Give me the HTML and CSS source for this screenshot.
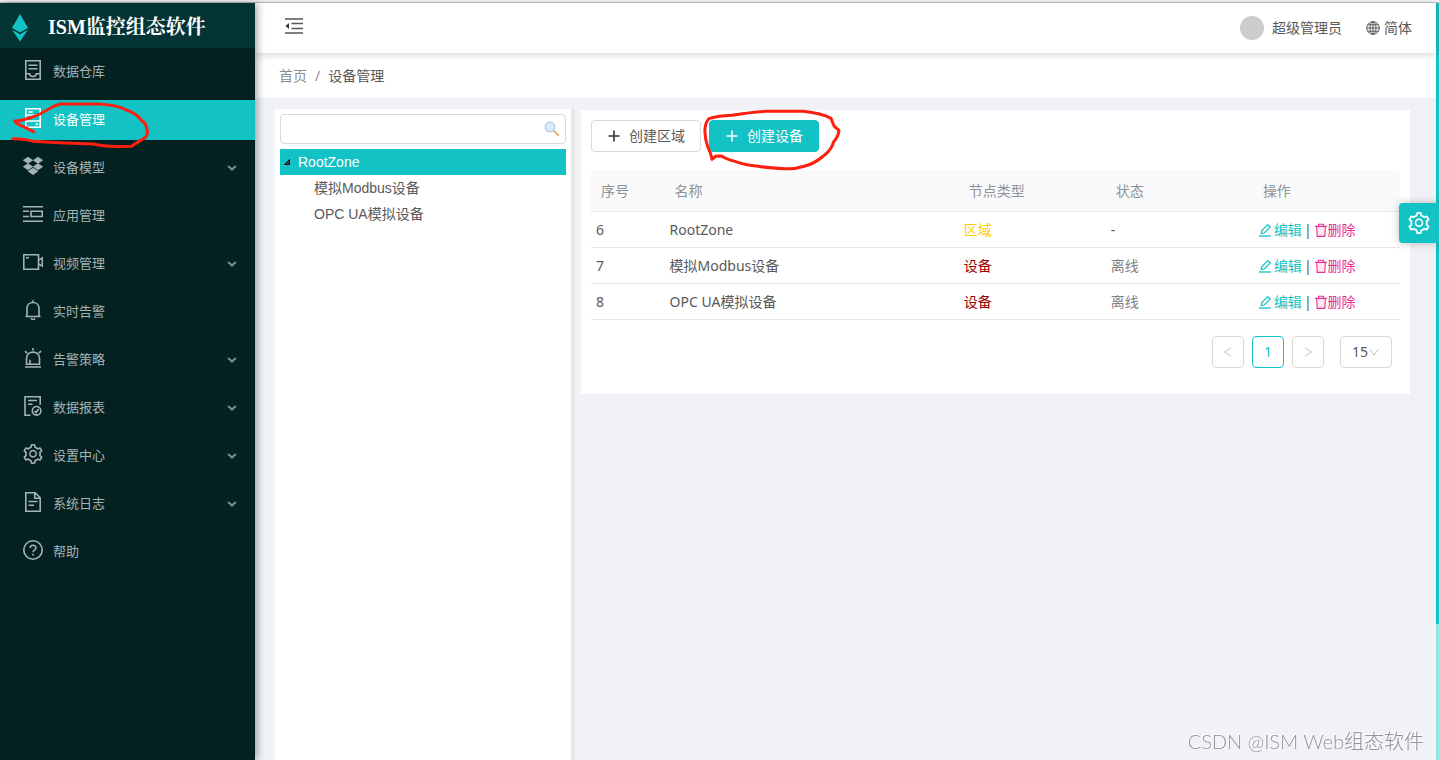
FILE: index.html
```html
<!DOCTYPE html>
<html lang="zh-CN">
<head>
<meta charset="utf-8">
<meta name="viewport" content="width=device-width, initial-scale=1">
<title>ISM监控组态软件</title>
<link rel="stylesheet" href="styles.css">
</head>
<body>
<svg class="defs" aria-hidden="true">
  <symbol id="gear" viewBox="64 64 896 896"><path fill="currentColor" fill-rule="evenodd" d="M924.8 625.7l-65.5-56c3.1-19 4.7-38.4 4.7-57.8s-1.6-38.8-4.7-57.8l65.5-56a32.03 32.03 0 0 0 9.3-35.2l-.9-2.6a443.74 443.74 0 0 0-79.7-137.9l-1.8-2.1a32.12 32.12 0 0 0-35.1-9.5l-81.3 28.9c-30-24.6-63.5-44-99.7-57.6l-15.7-85a32.05 32.05 0 0 0-25.8-25.7l-2.7-.5c-52.1-9.4-106.9-9.4-159 0l-2.7.5a32.05 32.05 0 0 0-25.8 25.7l-15.8 85.4a351.86 351.86 0 0 0-99 57.4l-81.9-29.1a32 32 0 0 0-35.1 9.5l-1.8 2.1a446.02 446.02 0 0 0-79.7 137.9l-.9 2.6c-4.5 12.5-.8 26.5 9.3 35.2l66.3 56.6c-3.1 18.8-4.6 38-4.6 57.1 0 19.2 1.5 38.4 4.6 57.1L99 625.5a32.03 32.03 0 0 0-9.3 35.2l.9 2.6c18.1 50.4 44.9 96.9 79.7 137.9l1.8 2.1a32.12 32.12 0 0 0 35.1 9.5l81.9-29.1c29.8 24.5 63.1 43.9 99 57.4l15.8 85.4a32.05 32.05 0 0 0 25.8 25.7l2.7.5a449.4 449.4 0 0 0 159 0l2.7-.5a32.05 32.05 0 0 0 25.8-25.7l15.7-85a350 350 0 0 0 99.7-57.6l81.3 28.9a32 32 0 0 0 35.1-9.5l1.8-2.1c34.8-41.1 61.6-87.5 79.7-137.9l.9-2.6c4.5-12.3.8-26.3-9.3-35zM788.3 465.9c2.5 15.1 3.8 30.6 3.8 46.1s-1.3 31-3.8 46.1l-6.6 40.1 74.7 63.9a370.03 370.03 0 0 1-42.6 73.6L721 702.8l-31.4 25.8c-23.9 19.6-50.5 35-79.3 45.8l-38.1 14.3-17.9 97a377.5 377.5 0 0 1-85 0l-17.9-97.2-37.8-14.5c-28.5-10.8-55-26.2-78.7-45.7l-31.4-25.9-93.4 33.2c-17-22.9-31.2-47.6-42.6-73.6l75.5-64.5-6.5-40c-2.4-14.9-3.7-30.3-3.7-45.5 0-15.3 1.2-30.6 3.7-45.5l6.5-40-75.5-64.5c11.3-26.1 25.6-50.7 42.6-73.6l93.4 33.2 31.4-25.9c23.7-19.5 50.2-34.9 78.7-45.7l37.9-14.3 17.9-97.2c28.1-3.2 56.8-3.2 85 0l17.9 97 38.1 14.3c28.7 10.8 55.4 26.2 79.3 45.8l31.4 25.8 92.8-32.9c17 22.9 31.2 47.6 42.6 73.6L781.8 426l6.5 39.9zM512 326c-97.2 0-176 78.8-176 176s78.8 176 176 176 176-78.8 176-176-78.8-176-176-176zm79.2 255.2A111.6 111.6 0 0 1 512 614c-29.9 0-58-11.7-79.2-32.8A111.6 111.6 0 0 1 400 502c0-29.9 11.7-58 32.8-79.2C454 401.6 482.1 390 512 390c29.9 0 58 11.6 79.2 32.8A111.6 111.6 0 0 1 624 502c0 29.9-11.7 58-32.8 79.2z"/></symbol>
  <symbol id="arrow" viewBox="0 0 10 8"><path d="M1.2 2 5 5.6 8.8 2" fill="none" stroke="currentColor" stroke-width="2"/></symbol>
  <symbol id="edit" viewBox="0 0 14 14"><g fill="none" stroke="currentColor"><path d="M1 13h12" stroke-width="1.3"/><path d="M3.2 10.600 3.800 7.600 9.800 1.600l2.400 2.400-6 6z" stroke-width="1.200"/></g></symbol>
  <symbol id="trash" viewBox="0 0 14 14"><path d="M2.800 3.500h8.400l-.5 9.800H3.300z" fill="#ffe6f1"/><path d="M1 3.400h12M4.500 3V1.200h5V3M2.700 3.800l.5 9.600h7.600l.5-9.600" fill="none" stroke="currentColor" stroke-width="1.100"/></symbol>
  <symbol id="plus" viewBox="0 0 14 14"><path d="M7 1.500v11M1.500 7h11" fill="none" stroke="currentColor" stroke-width="1.600"/></symbol>
</svg>

<div class="app">
  <aside class="sidebar">
    <div class="brand">
      <svg class="brand-mark" viewBox="0 0 16 28" aria-hidden="true"><path d="M8 0 16 14 8 18.500 0 14z" fill="#13c2c4"/><path d="M0 15.800 8 20.300 16 15.800 8 27.500z" fill="#13c2c4"/></svg>
      <h1 class="brand-name">ISM监控组态软件</h1>
    </div>
    <nav class="menu">
      <a class="item" href="#"><svg class="icon" viewBox="0 0 20 20"><path d="M2.800.8h14.400v18.400H2.800zM5.500 5.200h9M5.500 8.800h9M3 13.700h3.700c.3 3.700 6.300 3.700 6.600 0H17"/></svg><span>数据仓库</span></a>
      <a class="item active" href="#" aria-current="page"><svg class="icon" viewBox="0 0 20 20"><path d="M2.800.8h14.400v18.400H2.800zM3 7h14M3 13h14M5.500 4h4.200M5.500 10h4.200"/><circle cx="13.800" cy="16.200" r=".5"/></svg><span>设备管理</span>
        <svg class="mark mark-menu" viewBox="30 300 424 150" aria-hidden="true"><path d="M38 416Q80 417 100 424 200 430 280 432 310 438 350 440L395 439 412 428 438 412Q447 398 441 386 440 370 425 361 410 340 380 330 350 314 295 312H182Q165 315 150 325 120 345 90 354 65 362 44 363 52 373 70 380L101 395"/></svg></a>
      <a class="item" href="#"><svg class="icon" viewBox="0 0 20 20"><path class="solid" d="M.2 4.200 5 1l4.800 3.200L5 7.400zM10.200 4.200 15 1l4.800 3.200L15 7.400zM.2 10.700 5 7.600l4.800 3.100L5 14zM10.200 10.700 15 7.600l4.800 3.100L15 14zM5 15.200l5-3.300 5 3.300-5 3.600z"/></svg><span>设备模型</span><svg class="arrow"><use href="#arrow"/></svg></a>
      <a class="item" href="#"><svg class="icon" viewBox="0 0 20 20"><path d="M0 2.700h20M0 17.300h20M0 7.300h6M0 12.500h6M8 7.300h11.300v5.200H8z"/></svg><span>应用管理</span></a>
      <a class="item" href="#"><svg class="icon" viewBox="0 0 20 20"><path d="M.8 2.700h14.700v14.600H.8zM3 5.700h3M15.700 8.200l3.600-2.300v8.200l-3.600-2.300"/></svg><span>视频管理</span><svg class="arrow"><use href="#arrow"/></svg></a>
      <a class="item" href="#"><svg class="icon" viewBox="0 0 20 20"><path d="M2.500 16.500h15M4 16.300V8.500c0-8 12-8 12 0v7.800M10 .3v2M8 18.300c.6 1.500 3.400 1.500 4 0"/></svg><span>实时告警</span></a>
      <a class="item" href="#"><svg class="icon" viewBox="0 0 20 20"><path d="M2 19h16M3.500 16.300V10.500c0-8.500 13-8.500 13 0v5.800zM7 16v-4.200M10 0v2.500M2 3.200l2.200 2M18 3.200l-2.200 2"/></svg><span>告警策略</span><svg class="arrow"><use href="#arrow"/></svg></a>
      <a class="item" href="#"><svg class="icon" viewBox="0 0 20 20"><path d="M7.500 19.200H2V.8h15.200v8M5 4.500h9M5 8.300h4.500M11.500 15l1.500 1.500 2.700-3.500"/><circle cx="13.600" cy="14.800" r="4.300"/></svg><span>数据报表</span><svg class="arrow"><use href="#arrow"/></svg></a>
      <a class="item" href="#"><svg class="icon icon-fill"><use href="#gear"/></svg><span>设置中心</span><svg class="arrow"><use href="#arrow"/></svg></a>
      <a class="item" href="#"><svg class="icon" viewBox="0 0 20 20"><path d="M2.800.8h9.400l5 5v13.400H2.800zM11.700 1v5.300H17M5.500 9.500h9M5.500 13.200H11"/></svg><span>系统日志</span><svg class="arrow"><use href="#arrow"/></svg></a>
      <a class="item" href="#"><svg class="icon" viewBox="0 0 20 20"><circle cx="10" cy="10" r="9.200"/><path d="M7.200 8c0-3.700 5.700-3.700 5.700 0 0 2-2.900 2.100-2.900 4.300M10 13.800v1.700"/></svg><span>帮助</span></a>
    </nav>
  </aside>

  <div class="main">
    <header class="topbar">
      <button class="fold" type="button" aria-label="收起菜单"><svg viewBox="0 0 18 16"><path d="M0 1h18M6.500 5.500H18M6.500 10.500H18M0 15h18" fill="none" stroke="#555" stroke-width="1.500"/><path d="M4 5v6L.5 8z" fill="#333"/></svg></button>
      <div class="user"><span class="avatar"></span><span>超级管理员</span></div>
      <button class="lang" type="button"><svg viewBox="0 0 14 14" aria-hidden="true"><g fill="none" stroke="currentColor"><circle cx="7" cy="7" r="6.300"/><ellipse cx="7" cy="7" rx="3" ry="6.300"/><path d="M7 .7v12.600M.7 7h12.600M1.500 3.800h11M1.500 10.200h11"/></g></svg>简体</button>
    </header>
    <nav class="crumbs"><a href="#">首页</a><span class="slash">/</span><span>设备管理</span></nav>

    <div class="content">
      <section class="tree">
        <div class="search">
          <input type="text" aria-label="搜索">
          <svg viewBox="0 0 16 16" aria-hidden="true"><path d="m9.500 9.500 4.800 4.800" stroke="#e8b273" stroke-width="2" stroke-linecap="round"/><circle cx="6" cy="6" r="4.800" fill="#d5ecfc" stroke="#b4c8e4" stroke-width="1.200"/></svg>
        </div>
        <ul class="nodes">
          <li><a class="node root" href="#"><svg viewBox="0 0 6 6" aria-hidden="true"><path d="M5.500.5v5h-5z" fill="#444" stroke="#111"/></svg>RootZone</a>
            <ul class="nodes">
              <li><a class="node child" href="#">模拟Modbus设备</a></li>
              <li><a class="node child" href="#">OPC UA模拟设备</a></li>
            </ul>
          </li>
        </ul>
      </section>

      <section class="panel">
        <div class="actions">
          <button class="btn" type="button"><svg><use href="#plus"/></svg>创建区域</button>
          <div class="marked">
            <button class="btn primary" type="button"><svg><use href="#plus"/></svg>创建设备</button>
            <svg class="mark mark-create" viewBox="384 24 420 192" aria-hidden="true"><path d="M411 178Q408 160 398 140 388 110 390 85 393 62 404 55 430 48 470 46 530 36 575 34H685Q740 40 768 55L777 78 792 91Q790 110 776 125 770 150 745 168 720 190 690 198 660 208 630 206 580 204 550 199 510 195 480 184 450 176 442 169L423 168 411 178"/></svg>
          </div>
        </div>
        <table class="grid">
          <colgroup><col class="c1"><col class="c4"><col class="c2"><col class="c2"><col class="c2"></colgroup>
          <thead><tr><th>序号</th><th>名称</th><th>节点类型</th><th>状态</th><th>操作</th></tr></thead>
          <tbody>
            <tr><td>6</td><td>RootZone</td><td class="zone">区域</td><td>-</td><td><div class="ops"><a class="edit" href="#"><svg><use href="#edit"/></svg>编辑</a><i>|</i><a class="del" href="#"><svg><use href="#trash"/></svg>删除</a></div></td></tr>
            <tr><td>7</td><td>模拟Modbus设备</td><td class="device">设备</td><td class="off">离线</td><td><div class="ops"><a class="edit" href="#"><svg><use href="#edit"/></svg>编辑</a><i>|</i><a class="del" href="#"><svg><use href="#trash"/></svg>删除</a></div></td></tr>
            <tr><td>8</td><td>OPC UA模拟设备</td><td class="device">设备</td><td class="off">离线</td><td><div class="ops"><a class="edit" href="#"><svg><use href="#edit"/></svg>编辑</a><i>|</i><a class="del" href="#"><svg><use href="#trash"/></svg>删除</a></div></td></tr>
          </tbody>
        </table>
        <div class="pager">
          <button type="button" aria-label="上一页"><svg viewBox="0 0 10 10"><path d="M8 1 1.500 5 8 9"/></svg></button>
          <button class="current" type="button">1</button>
          <button type="button" aria-label="下一页"><svg viewBox="0 0 10 10"><path d="M2 1l6.500 4L2 9"/></svg></button>
          <div class="size"><select aria-label="每页条数"><option>15</option></select><svg viewBox="0 0 10 10" aria-hidden="true"><path d="M.5 2 5 8l4.500-6"/></svg></div>
        </div>
      </section>
    </div>
  </div>
  <div class="scroll"><div class="thumb"></div></div>
</div>
<button class="setting" type="button" aria-label="设置"><svg><use href="#gear"/></svg></button>
<div class="watermark">CSDN @ISM Web组态软件</div>
</body>
</html>
```
FILE: styles.css
```css
* { box-sizing: border-box; }
body {
  margin: 0;
  font: 14px/20px "Noto Sans", "Noto Sans CJK SC", sans-serif;
  color: #595959;
  background: #f0f2f5;
}
a { color: inherit; text-decoration: none; }
button, input, select { font: inherit; color: inherit; }
svg { display: block; flex: none; }
.defs { position: absolute; width: 0; height: 0; }
.app {
  display: flex;
  min-height: calc(100vh - 2px);
  margin-top: 2px;
  border-top: 1px solid #bfbfbf;
  box-shadow: 0 -2px #f6f6f6;
}

.sidebar {
  flex: none;
  width: 255px;
  background: #032121;
  box-shadow: 2px 0 8px rgba(0, 21, 41, .4);
  z-index: 2;
}
.brand {
  display: flex;
  align-items: center;
  gap: 20px;
  height: 45px;
  padding: 4px 0 0 12px;
  background: #053434;
}
.brand-mark { width: 16px; height: 28px; }
.brand-name {
  margin: 0 0 2px;
  color: #fff;
  font: bold 20px/28px "Liberation Serif", "Noto Serif CJK SC", "Noto Sans CJK SC", serif;
}
.menu {
  display: flex;
  flex-direction: column;
  gap: 8px;
  padding-top: 4px;
}
.item {
  position: relative;
  display: flex;
  align-items: center;
  gap: 10px;
  height: 40px;
  padding: 0 18px 2px 23px;
  color: #a7b3b3;
  font-size: 13px;
}
.item.active { background: #13c2c4; color: #fff; }
.icon {
  width: 20px;
  height: 20px;
  margin-bottom: 2px;
  fill: none;
  stroke: currentColor;
  stroke-width: 1.6px;
}
.icon-fill { stroke: none; }
.solid { fill: currentColor; stroke-width: .5px; }
.arrow { width: 10px; height: 8px; margin: 2px 0 0 auto; opacity: .75; }

.mark {
  position: absolute;
  fill: none;
  stroke: #ff1f0f;
  stroke-width: 9px;
  stroke-linecap: round;
  stroke-linejoin: round;
  pointer-events: none;
  z-index: 3;
}
.mark-menu { left: 10px; top: 0; width: 141px; height: 50px; }
.mark-create { left: -6px; top: -12px; width: 140px; height: 64px; }

.main { flex: 1; min-width: 0; display: flex; flex-direction: column; }
.topbar {
  display: flex;
  align-items: center;
  height: 50px;
  padding: 0 24px 0 30px;
  background: #fff;
  box-shadow: 0 1px 8px rgba(0, 0, 0, .2);
  z-index: 1;
}
.fold { padding: 0 0 4px; border: 0; background: none; }
.fold svg { width: 18px; height: 16px; }
.user { display: flex; align-items: center; gap: 8px; margin-left: auto; }
.avatar { width: 24px; height: 24px; border-radius: 50%; background: #ccc; }
.lang {
  display: flex;
  align-items: center;
  gap: 4px;
  margin-left: 24px;
  padding: 0;
  border: 0;
  background: none;
}
.lang svg { width: 14px; height: 14px; }
.crumbs {
  display: flex;
  align-items: center;
  gap: 8px;
  height: 45px;
  padding-left: 24px;
  background: #fff;
}
.crumbs a, .slash { color: #8c8c8c; }

.content {
  flex: 1;
  display: flex;
  align-items: stretch;
  gap: 6px;
  padding: 11px 26px 0 20px;
}
.tree {
  flex: none;
  width: 300px;
  padding: 5px;
  border-right: 4px solid #e6e6e6;
  background: #fff;
  font-family: "Liberation Sans", "Noto Sans CJK SC", sans-serif;
}
.search { position: relative; margin-bottom: 5px; }
.search input {
  display: block;
  width: 100%;
  height: 30px;
  padding: 0 28px 0 8px;
  border: 1px solid #d9d9d9;
  border-radius: 4px;
  background: #fff;
}
.search svg { position: absolute; right: 6px; top: 7px; width: 16px; height: 16px; }
.nodes { margin: 0; padding: 0; list-style: none; }
.node { display: flex; align-items: center; height: 26px; }
.root { gap: 8px; padding-left: 4px; background: #13c2c4; color: #fff; }
.root svg { width: 6px; height: 6px; }
.child { padding-left: 34px; }

.panel {
  flex: 1;
  min-width: 0;
  align-self: flex-start;
  margin-top: 1px;
  padding: 10px 10px 26px;
  background: #fff;
}
.actions { display: flex; gap: 8px; margin-bottom: 18px; }
.marked { position: relative; }
.btn {
  display: flex;
  align-items: center;
  gap: 8px;
  height: 32px;
  padding: 0 15px;
  border: 1px solid #d9d9d9;
  border-radius: 4px;
  background: #fff;
}
.btn svg { width: 14px; height: 14px; color: #333; }
.primary { border-color: #13c2c4; background: #13c2c4; color: #fff; }
.primary svg { color: #fff; }

.grid { width: 100%; table-layout: fixed; border-collapse: separate; border-spacing: 0; }
.c1 { width: 9.09%; }
.c4 { width: 36.36%; }
.c2 { width: 18.18%; }
.grid th {
  height: 42px;
  padding: 0 10px;
  border-bottom: 1px solid #e8e8e8;
  background: #fafafa;
  color: #8f9297;
  font-weight: 400;
  text-align: left;
}
.grid th:first-child { border-top-left-radius: 4px; }
.grid th:last-child { border-top-right-radius: 4px; }
.grid td { height: 36px; padding: 0 5px; border-bottom: 1px solid #e8e8e8; }
.grid .zone { color: #fc0; }
.grid .device { color: #900; }
.grid .off { color: #808080; }
.ops { display: flex; align-items: center; gap: 2px; }
.ops a { display: flex; align-items: center; }
.ops svg { width: 14px; height: 14px; }
.ops i { font-style: normal; }
.edit { gap: 2px; color: #13c2c4; }
.del { color: #eb2f96; }

.pager { display: flex; justify-content: flex-end; gap: 8px; padding: 16px 8px 0 0; }
.pager button {
  display: flex;
  align-items: center;
  justify-content: center;
  width: 32px;
  height: 32px;
  padding: 0;
  border: 1px solid #d9d9d9;
  border-radius: 4px;
  background: #fff;
}
.pager .current { border-color: #13c2c4; color: #13c2c4; }
.pager svg { width: 10px; height: 10px; fill: none; stroke: #bfbfbf; stroke-width: 1px; }
.size { position: relative; margin-left: 8px; }
.size select {
  appearance: none;
  width: 52px;
  height: 32px;
  padding: 0 0 0 11px;
  border: 1px solid #d9d9d9;
  border-radius: 4px;
  background: #fff;
}
.size svg { position: absolute; right: 13px; top: 11px; }

.scroll { flex: none; width: 3px; background: #8ee8dd; }
.thumb { height: 82%; background: #13c2c4; }
.setting {
  position: fixed;
  right: 0;
  top: 203px;
  display: flex;
  align-items: center;
  justify-content: center;
  width: 40px;
  height: 40px;
  padding: 0;
  border: 0;
  border-radius: 4px 0 0 4px;
  background: #13c2c4;
  color: #fff;
  box-shadow: 0 0 8px rgba(0, 0, 0, .25);
  z-index: 4;
}
.setting svg { width: 22px; height: 22px; }
.watermark {
  position: fixed;
  right: 15px;
  bottom: 5px;
  color: #919396;
  font: 300 20px/28px Lato, "Noto Sans CJK SC", sans-serif;
  text-shadow: -1px -1px #fff;
}
```
